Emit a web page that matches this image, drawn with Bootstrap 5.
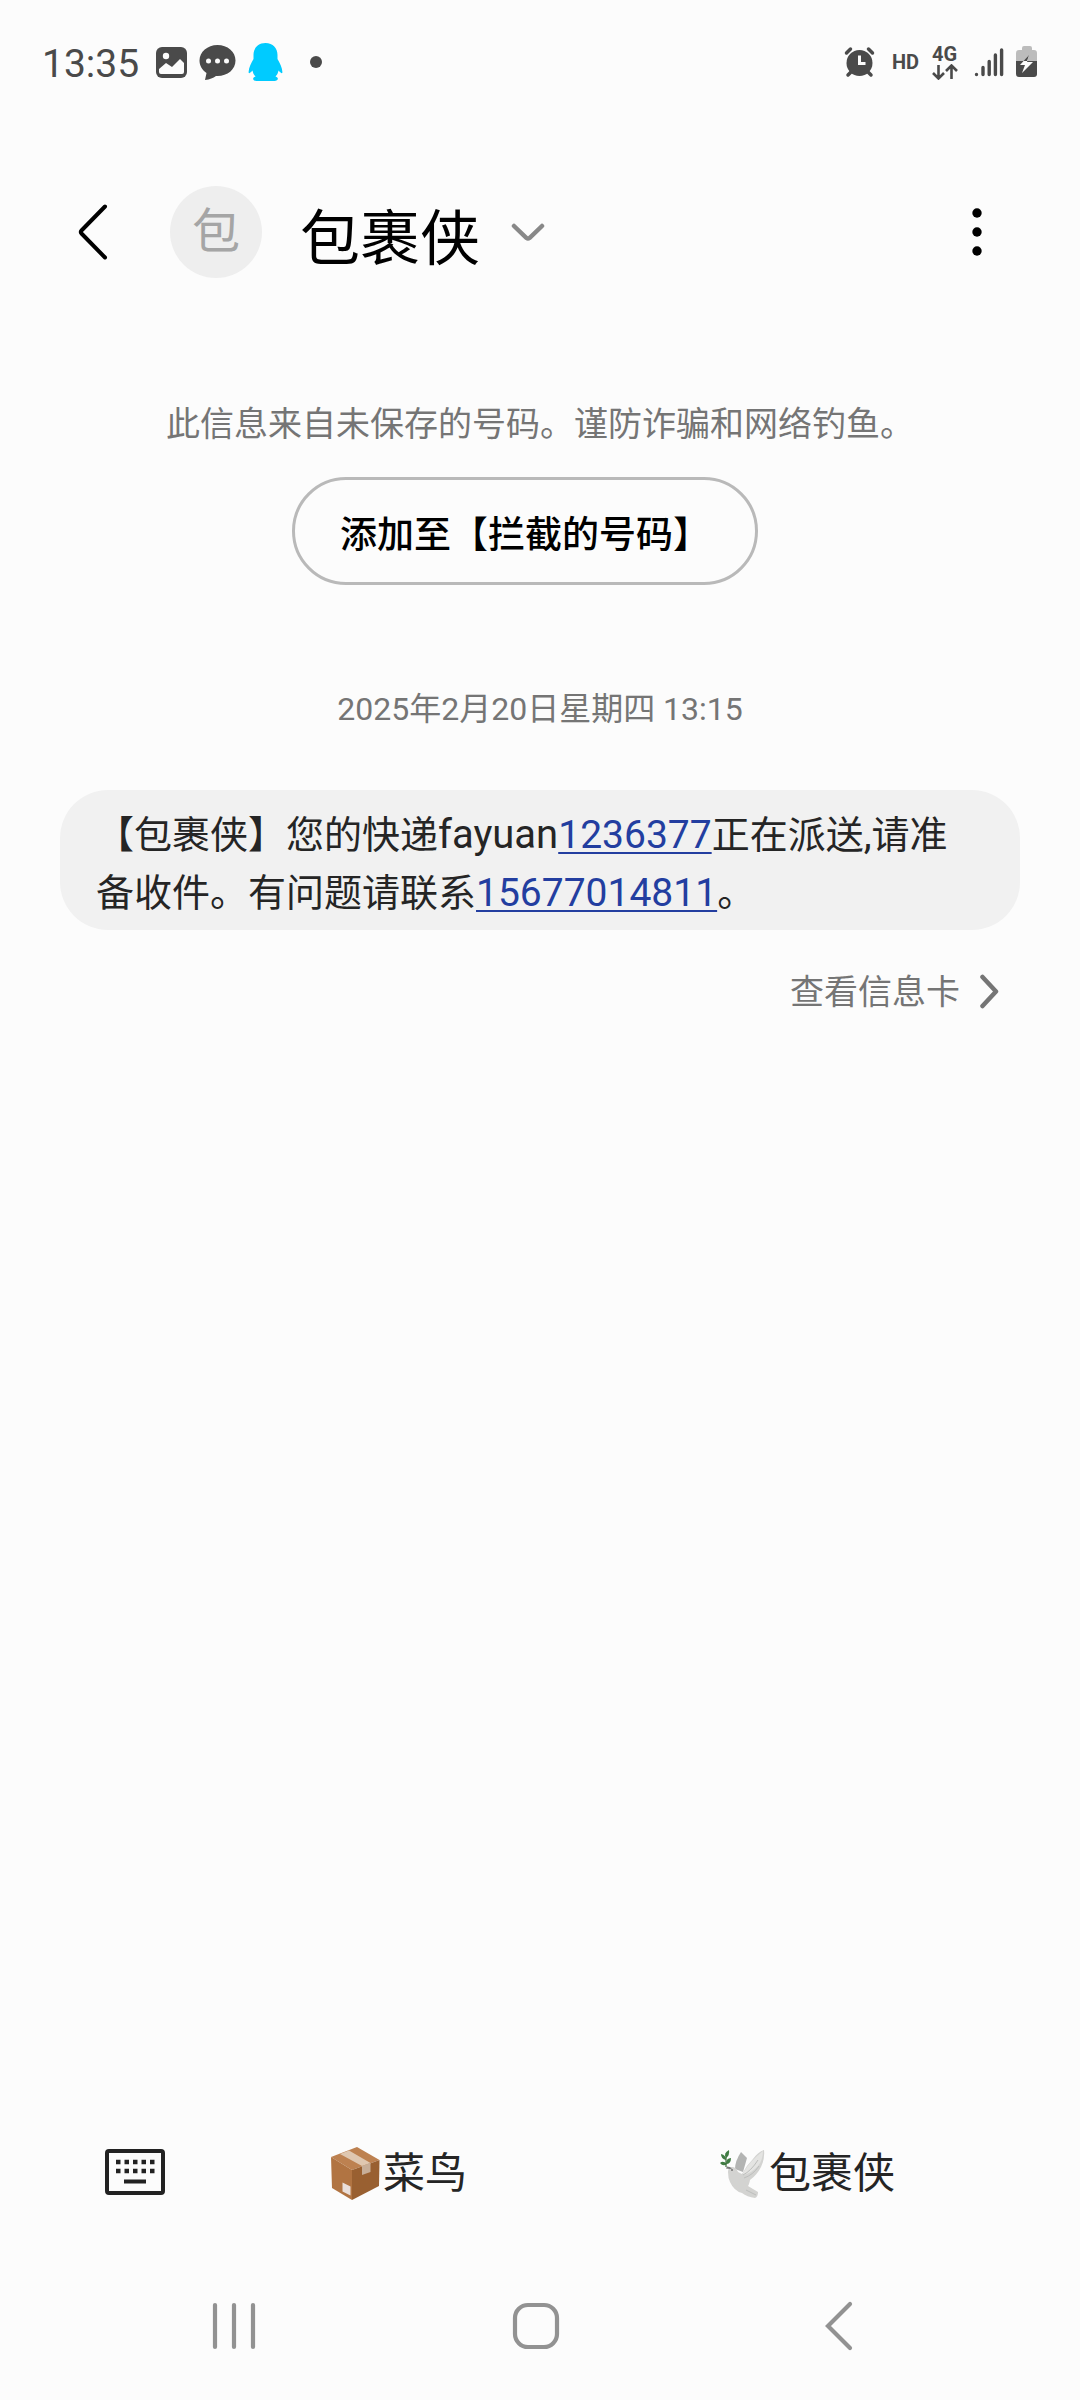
<!DOCTYPE html>
<html lang="zh-CN">
<head>
<meta charset="utf-8">
<meta name="viewport" content="width=device-width, initial-scale=1">
<title>包裹侠</title>
<link href="https://cdn.jsdelivr.net/npm/bootstrap@5.3.0/dist/css/bootstrap.min.css" rel="stylesheet">
<style>
  body { background: #fcfcfc; color: #252525; font-family: Roboto, "Noto Sans CJK SC", sans-serif; }
  svg { display: block; flex: none; }
  .bare { background: none; border: 0; padding: 0; color: inherit; }
  .status { padding: 40px 42px; line-height: 44px; color: #4a4a4a; }
  .clock { font-size: 39px; margin-right: 5px; padding-top: 2px; height: 44px; }
  .notif { gap: 12px; }
  .tiny { font-size: 20px; font-weight: 700; line-height: 20px; width: 28px; }
  .topbar { padding: 62px 98px 0 75px; height: 214px; }
  .avatar { width: 92px; height: 92px; line-height: 92px; font-size: 48px; background: #eee; color: #a5a5a5; margin-left: 61px; }
  .title { font-family: "Noto Sans CJK SC", sans-serif; font-size: 60px; line-height: 96px; color: #000; margin: 0 31px 0 38px; font-weight: 400; }
  .notice { font-size: 34px; line-height: 50px; color: #757575; margin: 61px 0 28px; }
  .blocker { padding-right: 30px; }
  .pill { --bs-btn-color: #000; --bs-btn-border-color: #b9b9b9; border-width: 3px; font-family: "Noto Sans CJK SC", sans-serif; font-size: 37px; font-weight: 500; line-height: 54px; padding: 25px 45px 23px; }
  .stamp { font-size: 32px; line-height: 46px; color: #757575; margin: 101px 0 58px; }
  .bubble { background: #f1f1f1; border-radius: 48px; margin: 0 60px 36px; padding: 16px 36px 8px; font-size: 38px; line-height: 58px; }
  .latin { font-size: 40px; line-height: 1; }
  .bubble a { font-size: 39px; line-height: 1; color: #233ea0; text-decoration-thickness: 2px; text-underline-offset: 4px; }
  .infolink { font-size: 34px; line-height: 50px; color: #757575; margin-right: 81px; padding-top: 1px; gap: 19px; }
  .replies { padding: 0 69px 0 105px; height: 156px; }
  .reply { font-size: 42px; line-height: 60px; gap: 3px; }
  .keys { margin: 0 30px 5px 0; }
  .softkeys { padding: 0 90px 0 83px; height: 148px; color: #929292; }
</style>
<script src="https://cdn.jsdelivr.net/npm/bootstrap@5.3.0/dist/js/bootstrap.bundle.min.js"></script>
</head>
<body>
<div class="d-flex flex-column min-vh-100">
  <div class="status d-flex align-items-center justify-content-between">
    <div class="notif d-flex align-items-center">
      <span class="clock">13:35</span>
      <svg width="31" height="32" viewBox="0 0 31 32"><rect y="1" width="31" height="31" rx="6" fill="#4a4a4a"/><circle cx="10" cy="10" r="3.2" fill="#fcfcfc"/><path d="M3 23l7-6 6 4 8-8 4 4v9q0 2-2 2H5q-2 0-2-2z" fill="#fcfcfc"/></svg>
      <svg width="37" height="37" viewBox="0 0 37 37"><path d="M18.500 1C8.500 1 .5 8 .5 16.500c0 5 2.500 9.500 7 12.500L6 36c5-.5 8-2 11-4h1.500c10 0 18-6.500 18-15.500S28.500 1 18.500 1z" fill="#4a4a4a"/><g fill="#fcfcfc"><circle cx="9.500" cy="17" r="2.500"/><circle cx="18.500" cy="17" r="2.500"/><circle cx="27.500" cy="17" r="2.500"/></g></svg>
      <svg width="35" height="38" viewBox="0 0 35 38"><path d="M17.500 0C10 0 5.500 5 5.500 12v4C3 20 .8 25 .6 29c0 2 1 1.500 3.900-1.500.4 2.500 1.500 4.500 3 6-4 1.500-2.500 4.500 1 4.500h18c3.500 0 5-3 1-4.500 1.500-1.500 2.600-3.500 3-6 2.900 3 3.900 3.500 3.900 1.500-.2-4-2.400-9-4.900-13v-4c0-7-4.500-12-12-12z" fill="#00cbff"/></svg>
      <svg width="44" height="12" viewBox="0 0 44 12"><circle cx="21" cy="6" r="6" fill="#4a4a4a"/></svg>
    </div>
    <div class="notif d-flex align-items-center">
      <svg width="36" height="32" viewBox="0 0 36 32"><g stroke="#4a4a4a" stroke-width="3.500" stroke-linecap="round"><path d="M2.500 7l4-4M28.500 7l-4-4M4 29l4-4M27 29l-4-4"/></g><circle cx="15.500" cy="17" r="13" fill="#4a4a4a"/><path d="M15.500 9.500v8h6" fill="none" stroke="#fcfcfc" stroke-width="3"/></svg>
      <span class="tiny">HD</span>
      <div class="tiny"><span class="d-block">4G</span>
        <svg width="26" height="16" viewBox="0 0 26 16"><path d="M6.500 1v13M1 9l5.500 5.500L12 9M19.500 15V2M14 7l5.500-5.500L25 7" fill="none" stroke="#4a4a4a" stroke-width="2.600"/></svg></div>
      <svg width="32" height="32" viewBox="0 0 32 32"><path d="M4.500 28.500v0M11 21.500v7M17.200 15.500v13M23.400 9v19.500M29.600 4v24.500" stroke="#4a4a4a" stroke-width="3.400" stroke-linecap="round"/></svg>
      <svg width="22" height="32" viewBox="0 0 22 32"><path d="M6 4V2q0-2 2-2h6q2 0 2 2v2h2q3 0 3 3v8H0V7q0-3 3-3z" fill="#bcbcbc"/><path d="M0 15h21v13q0 3-3 3H3q-3 0-3-3z" fill="#4a4a4a"/><path d="M13 9L4 19h5l-3 8 11-11h-6z" fill="#fcfcfc"/><path d="M13 9l-5.500 6H11z" fill="#4a4a4a"/></svg>
    </div>
  </div>

  <header class="topbar d-flex align-items-start">
    <button class="bare" aria-label="返回"><svg width="34" height="92" viewBox="0 0 34 92"><path d="M30 20.500L6.500 44.500Q5 46 6.500 47.500L30 71.500" fill="none" stroke="#000" stroke-width="4" stroke-linecap="round"/></svg></button>
    <div class="avatar rounded-circle text-center">包</div>
    <h1 class="title">包裹侠</h1>
    <button class="bare" aria-label="展开详情"><svg width="34" height="92" viewBox="0 0 34 92"><path d="M3 40L15.500 52q1.500 1 3 0L31 40" fill="none" stroke="#888" stroke-width="4.500" stroke-linecap="round"/></svg></button>
    <button class="bare ms-auto" aria-label="更多选项"><svg width="10" height="92" viewBox="0 0 10 92"><circle cx="5" cy="27" r="4.700"/><circle cx="5" cy="46" r="4.700"/><circle cx="5" cy="65" r="4.700"/></svg></button>
  </header>

  <main class="flex-grow-1">
    <p class="notice text-center">此信息来自未保存的号码。谨防诈骗和网络钓鱼。</p>
    <div class="blocker text-center d-flex justify-content-center"><button class="pill btn rounded-pill">添加至【拦截的号码】</button></div>
    <p class="stamp text-center">2025年2月20日星期四 13:15</p>
    <div class="bubble">【包裹侠】您的快递<span class="latin">fayuan</span><a href="tel:1236377">1236377</a>正在派送<span class="latin">,</span>请准备收件。有问题请联系<a href="tel:15677014811">15677014811</a>。</div>
    <div class="d-flex justify-content-end">
      <a href="#" class="infolink d-flex align-items-center text-decoration-none">查看信息卡<svg width="20" height="38" viewBox="0 0 20 38"><path d="M3.500 4L17 18.500 3.500 33" fill="none" stroke="#757575" stroke-width="4.500" stroke-linecap="round" stroke-linejoin="round"/></svg></a>
    </div>
  </main>

  <div class="replies d-flex align-items-center">
    <button class="keys bare" aria-label="键盘"><svg width="60" height="46" viewBox="0 0 60 46"><rect x="2" y="2" width="56" height="42" rx="2" fill="none" stroke="#222" stroke-width="4"/><path d="M11 13h39M11 22h39" stroke="#222" stroke-width="4.500" stroke-dasharray="4.500 4"/><path d="M19 32.500h22" stroke="#222" stroke-width="4"/></svg></button>
    <div class="row g-0 flex-grow-1">
      <div class="col-6 d-flex justify-content-center"><button class="reply bare d-flex align-items-center">
        <svg width="49" height="54" viewBox="0 0 49 54"><path d="M0 10L26 0l22.500 13L21 23z" fill="#bd8150"/><path d="M0 10l21 13v30L1 41z" fill="#b17442"/><path d="M21 23l27.500-10L48 39 21 53z" fill="#996031"/><path d="M9 7l9-3.500L39.500 16 31 19z" fill="#dfc7b0"/><path d="M31 19l8.500-3v9L31 28z" fill="#c7ae98"/><path d="M11.500 35.500l8 4v9l-8-4z" fill="#eadfda"/></svg>菜鸟</button></div>
      <div class="col-6 d-flex justify-content-center"><button class="reply bare d-flex align-items-center">
        <svg width="47" height="50" viewBox="0 0 47 50"><path d="M16 20q0-8 6-17l6 6-4 14z" fill="#b3b4b3"/><path d="M9 23q0-5 4-5 4 0 6 5l4 2q4-8 11-15Q39 3 45 1q1 9-3 17-4 8-11 13-1 5-2 6l10 6q0 5-3 6-8-1-13-5-8-2-12-11-2-4-2-10z" fill="#d3d3d1"/><path d="M24 24Q31 12 44 2q0 9-5 15-6 7-15 9z" fill="#e4e4e2"/><path d="M25 29q9-3 15-12M24 26q8-4 15-15M27 41l10 5" fill="none" stroke="#bdbebc" stroke-width="1"/><path d="M11 20l-4-.5 1-2q3 0 5 2z" fill="#777"/><circle cx="13" cy="21" r=".8" fill="#333"/><g fill="#407c43"><path d="M10 1Q4 4 7 9q4-3 3-8z"/><path d="M2 5q0 5 5 6 0-5-5-6zM1 14q3-3 7 1-4 3-7-1z"/><path d="M12 9Q7 9 7 15q5 0 5-6z"/></g><path d="M7 8v10" stroke="#396b38" stroke-width="1.200"/></svg>包裹侠</button></div>
    </div>
  </div>

  <nav class="softkeys d-flex align-items-center" aria-label="系统导航">
    <button class="bare flex-fill w-100" aria-label="最近任务"><svg class="mx-auto" width="44" height="48" viewBox="0 0 44 48"><path d="M3 3v42M22 3v42M41 3v42" stroke="#929292" stroke-width="4.200" stroke-linecap="round"/></svg></button>
    <button class="bare flex-fill w-100" aria-label="主屏幕"><svg class="mx-auto" width="48" height="48" viewBox="0 0 48 48"><rect x="3" y="3" width="42" height="42" rx="13" fill="none" stroke="#929292" stroke-width="4.200"/></svg></button>
    <button class="bare flex-fill w-100" aria-label="返回上一页"><svg class="mx-auto" width="30" height="50" viewBox="0 0 30 50"><path d="M26 3L4 25l22 22" fill="none" stroke="#929292" stroke-width="4.200" stroke-linecap="round"/></svg></button>
  </nav>
</div>
</body>
</html>
